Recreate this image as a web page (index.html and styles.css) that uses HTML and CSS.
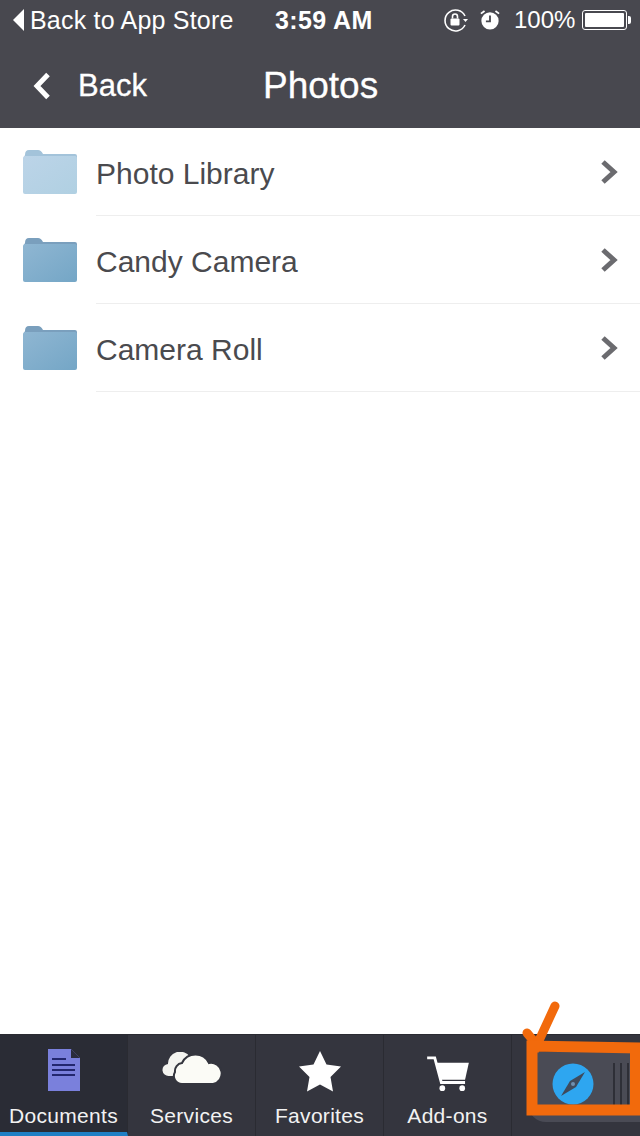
FILE: index.html
```html
<!DOCTYPE html>
<html lang="en">
<head>
    <meta charset="UTF-8">
    <title>Photos</title>
    <link rel="stylesheet" href="styles.css">
</head>
<body>
    <div class="page">
        <header class="top">
            <div class="status">
                <div class="status-left">
                    <svg class="back-tri" width="13" height="22" viewBox="0 0 13 22"><path d="M12 0V22L1 11Z" fill="#fff"/></svg>
                    <span>Back to App Store</span>
                </div>
                <div class="status-time">3:59 AM</div>
                <div class="status-right">
                    <svg width="26" height="26" viewBox="0 0 26 26" fill="none" stroke="#fff" stroke-width="1.6">
                        <path d="M22 9A10.500 10.500 0 1 0 22 18"/>
                        <path d="M20 12h5l-2.500 3z" fill="#fff" stroke="none"/>
                        <rect x="7.500" y="11.500" width="9" height="7" rx="1" fill="#fff" stroke="none"/>
                        <path d="M9.500 11.500V9.500a2.500 2.500 0 0 1 5 0v2"/>
                    </svg>
                    <svg class="alarm" width="20" height="24" viewBox="0 0 22 24">
                        <circle cx="11" cy="13" r="9.500" fill="#fff"/>
                        <path d="M11 7v6.500H6.500" fill="none" stroke="#48484f" stroke-width="2"/>
                        <path d="M1 5l4-3M21 5l-4-3" stroke="#fff" stroke-width="2"/>
                    </svg>
                    <span class="pct">100%</span>
                    <div class="battery"><div class="battery-fill"></div></div>
                    <div class="battery-tip"></div>
                </div>
            </div>
            <nav class="navbar">
                <div class="nav-back">
                    <svg width="20" height="28" viewBox="0 0 20 28"><path d="M16 2.500L5 14l11 11.500" fill="none" stroke="#fff" stroke-width="5"/></svg>
                    <span>Back</span>
                </div>
                <div class="nav-title">Photos</div>
            </nav>
        </header>

        <main class="folders">
            <svg class="defs" width="0" height="0">
                <defs>
                    <linearGradient id="folderLight" x1="0" y1="0" x2="1" y2="1">
                        <stop offset="0" stop-color="#bcd4e8"/>
                        <stop offset="1" stop-color="#b0d0e2"/>
                    </linearGradient>
                    <linearGradient id="folderDark" x1="0" y1="0" x2="1" y2="1">
                        <stop offset="0" stop-color="#8fb6d2"/>
                        <stop offset="1" stop-color="#74a6c6"/>
                    </linearGradient>
                </defs>
            </svg>
            <div class="row">
                <svg class="folder" width="54" height="44" viewBox="0 0 54 44">
                    <path d="M2 5Q2 0 6 0H15Q18 0 20 4H52Q54 4 54 6V9H0Z" fill="#a3c3da"/>
                    <path d="M0 9Q0 6 2 6H52Q54 6 54 9V42Q54 44 52 44H2Q0 44 0 42Z" fill="url(#folderLight)"/>
                </svg>
                <div class="row-body">
                    <span class="row-label">Photo Library</span>
                    <svg class="chev" width="18" height="24" viewBox="0 0 18 24"><path d="M3 2l11 10L3 22" fill="none" stroke="#6b6b6f" stroke-width="5"/></svg>
                </div>
            </div>
            <div class="row">
                <svg class="folder" width="54" height="44" viewBox="0 0 54 44">
                    <path d="M2 5Q2 0 6 0H15Q18 0 20 4H52Q54 4 54 6V9H0Z" fill="#7a9fbd"/>
                    <path d="M0 9Q0 6 2 6H52Q54 6 54 9V42Q54 44 52 44H2Q0 44 0 42Z" fill="url(#folderDark)"/>
                </svg>
                <div class="row-body">
                    <span class="row-label">Candy Camera</span>
                    <svg class="chev" width="18" height="24" viewBox="0 0 18 24"><path d="M3 2l11 10L3 22" fill="none" stroke="#6b6b6f" stroke-width="5"/></svg>
                </div>
            </div>
            <div class="row">
                <svg class="folder" width="54" height="44" viewBox="0 0 54 44">
                    <path d="M2 5Q2 0 6 0H15Q18 0 20 4H52Q54 4 54 6V9H0Z" fill="#7a9fbd"/>
                    <path d="M0 9Q0 6 2 6H52Q54 6 54 9V42Q54 44 52 44H2Q0 44 0 42Z" fill="url(#folderDark)"/>
                </svg>
                <div class="row-body">
                    <span class="row-label">Camera Roll</span>
                    <svg class="chev" width="18" height="24" viewBox="0 0 18 24"><path d="M3 2l11 10L3 22" fill="none" stroke="#6b6b6f" stroke-width="5"/></svg>
                </div>
            </div>
        </main>

        <footer class="tabbar">
            <div class="tab tab-active">
                <svg width="34" height="44" viewBox="0 0 34 44">
                    <path d="M1 1H24L33 10V43H1Z" fill="#7a80dc"/>
                    <path d="M24 1L33 10H24Z" fill="#2a2c3c"/>
                    <path d="M5 11H19M5 17H28M5 22H28M5 27H28" stroke="#23276e" stroke-width="1.800"/>
                </svg>
                <span>Documents</span>
            </div>
            <div class="tab">
                <svg class="cloud" width="60" height="34" viewBox="0 0 60 34">
                    <path d="M7 24a6 6 0 0 1-1-12 12 12 0 0 1 22-7L16 24Z" fill="#f4f4f0"/>
                    <path d="M20 32a8 8 0 0 1-7-12 8 8 0 0 1 7-9 15 15 0 0 1 27 0 10.500 10.500 0 0 1 4 21Z" fill="#fbfbf6" stroke="#34353e" stroke-width="2"/>
                </svg>
                <span>Services</span>
            </div>
            <div class="tab">
                <svg width="44" height="42" viewBox="0 0 44 42"><path d="M22 1l6.500 13.500L43 16.500 32.500 27l2.500 14.500L22 34.500 9 41.500 11.500 27 1 16.500l14.500-2Z" fill="#fff"/></svg>
                <span>Favorites</span>
            </div>
            <div class="tab">
                <svg width="44" height="36" viewBox="0 0 46 38">
                    <path d="M1 2H9L16 28H41" fill="none" stroke="#fff" stroke-width="3"/>
                    <path d="M10 7H45L41 25H15Z" fill="#fff"/>
                    <circle cx="17" cy="34" r="3" fill="#fff"/>
                    <circle cx="38" cy="34" r="3" fill="#fff"/>
                </svg>
                <span>Add-ons</span>
            </div>
            <div class="tab tab-drawer">
                <div class="drawer">
                    <svg width="42" height="42" viewBox="0 0 42 42">
                        <circle cx="21" cy="21" r="20.500" fill="#2ea6f0"/>
                        <path d="M33 9L24 24 9 33 18 18Z" fill="#3f4a5c"/>
                        <circle cx="21" cy="21" r="2" fill="#6f8fb0"/>
                    </svg>
                    <div class="grip"><i></i><i></i><i></i></div>
                </div>
            </div>
            <svg class="scribble" width="124" height="120" viewBox="0 0 124 120">
                <path d="M11 32L21 44L39 5" fill="none" stroke="#f26a0c" stroke-width="9" stroke-linecap="round"/>
                <path d="M124 47L16 45L16 109L124 109" fill="none" stroke="#f26a0c" stroke-width="11"/>
                <path d="M119 47V109" fill="none" stroke="#f26a0c" stroke-width="10"/>
            </svg>
        </footer>
    </div>
</body>
</html>
```

FILE: styles.css
```css
*{
    margin: 0;
    padding: 0;
    box-sizing: border-box;
}
html, body{
    width: 640px;
    height: 1136px;
    overflow: hidden;
}
body{
    font-family: "Liberation Sans", Arial, sans-serif;
    background: #fff;
}
.page{
    height: 1136px;
    display: flex;
    flex-direction: column;
}

/* top bar */
.top{
    height: 128px;
    background: #48484f;
    color: #fff;
}
.status{
    height: 40px;
    display: flex;
    align-items: center;
    padding-left: 12px;
    font-size: 25px;
}
.status-left{
    width: 263px;
    display: flex;
    align-items: center;
    gap: 5px;
    letter-spacing: .2px;
}
.status-time{
    width: 168px;
    font-size: 25px;
    font-weight: bold;
    letter-spacing: .4px;
}
.status-right{
    display: flex;
    align-items: center;
    font-size: 24px;
}
.alarm{
    margin-left: 11px;
}
.pct{
    margin-left: 14px;
}
.battery{
    width: 45px;
    height: 20px;
    margin-left: 7px;
    border: 1px solid #fff;
    border-radius: 3px;
    padding: 2px;
}
.battery-fill{
    height: 100%;
    background: #fff;
    border-radius: 1px;
}
.battery-tip{
    width: 3px;
    height: 8px;
    margin-left: 1px;
    background: #fff;
    border-radius: 0 2px 2px 0;
}
.navbar{
    height: 88px;
    display: flex;
    align-items: center;
    padding: 3px 0 0 32px;
}
.nav-back{
    width: 231px;
    display: flex;
    align-items: center;
    gap: 30px;
    font-size: 31px;
    -webkit-text-stroke: .3px #fff;
}
.nav-back svg{
    margin-right: -4px;
}
.nav-title{
    font-size: 37px;
    -webkit-text-stroke: .3px #fff;
}

/* folder list */
.folders{
    flex: 1;
}
.defs{
    display: block;
}
.row{
    height: 88px;
    display: flex;
    align-items: center;
    padding-left: 23px;
}
.folder{
    flex: none;
    margin-right: 19px;
}
.row-body{
    flex: 1;
    height: 88px;
    display: flex;
    align-items: center;
    justify-content: space-between;
    padding-right: 22px;
    border-bottom: 1px solid #eeeeee;
}
.row-label{
    font-size: 30px;
    color: #4a4a4e;
    padding-top: 4px;
}

/* bottom tabs */
.tabbar{
    height: 102px;
    background: #34353e;
    border-top: 1px solid #2a2b32;
    display: flex;
    position: relative;
}
.tab{
    width: 128px;
    display: flex;
    flex-direction: column;
    align-items: center;
    justify-content: flex-end;
    padding-bottom: 8px;
    border-right: 1px solid #2a2b32;
    color: #f2f2f2;
    font-size: 21px;
    letter-spacing: .3px;
}
.tab svg{
    margin-bottom: 12px;
}
.tab .cloud{
    margin-bottom: 18px;
}
.tab-active{
    background: #2a2c35;
    border-bottom: 4px solid #1f7fc4;
    padding-bottom: 4px;
}
.tab-drawer{
    border-right: 0;
    padding: 0;
    justify-content: flex-start;
}
.drawer{
    width: 112px;
    height: 70px;
    margin-left: 16px;
    margin-top: 17px;
    padding: 11px 0 0 24px;
    background: #4a4b55;
    border-bottom-left-radius: 18px;
    display: flex;
    align-items: flex-start;
}
.drawer svg{
    margin: 0;
}
.grip{
    display: flex;
    gap: 5px;
    margin-left: 19px;
    height: 42px;
}
.grip i{
    width: 2px;
    background: #2e2f37;
}
.scribble{
    position: absolute;
    right: 0;
    top: -34px;
}
```
